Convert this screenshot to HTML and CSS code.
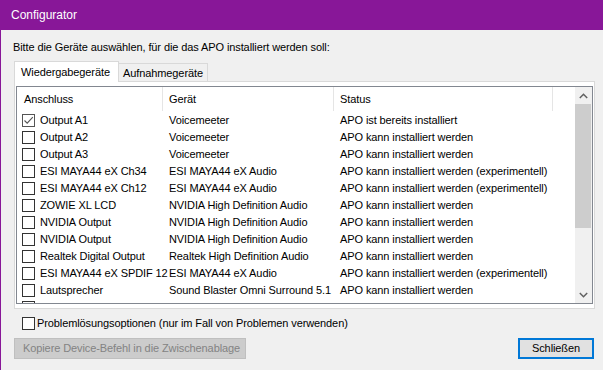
FILE: index.html
```html
<!DOCTYPE html>
<html lang="de">
<head>
<meta charset="utf-8">
<title>Configurator</title>
<link rel="stylesheet" href="styles.css">
</head>
<body>
<div class="window">
  <div class="titlebar">Configurator</div>
  <div class="content">
    <p class="intro">Bitte die Geräte auswählen, für die das APO installiert werden soll:</p>
    <div class="tabs">
      <div class="tab active">Wiedergabegeräte</div>
      <div class="tab">Aufnahmegeräte</div>
    </div>
    <div class="panel">
      <div class="list">
        <div class="list-main">
          <div class="header">
            <div class="hcell c1">Anschluss</div>
            <div class="hcell c2">Gerät</div>
            <div class="hcell c3">Status</div>
            <div class="hcell c4"></div>
          </div>
          <div class="rows">
            <div class="row"><div class="cell c1"><span class="cb checked"><svg width="11" height="11" viewBox="0 0 11 11"><path d="M1.5 5.5 L4.2 8.2 L9.8 2.2" fill="none" stroke="#555" stroke-width="1.1"/></svg></span>Output A1</div><div class="cell c2">Voicemeeter</div><div class="cell c3">APO ist bereits installiert</div></div>
            <div class="row"><div class="cell c1"><span class="cb"></span>Output A2</div><div class="cell c2">Voicemeeter</div><div class="cell c3">APO kann installiert werden</div></div>
            <div class="row"><div class="cell c1"><span class="cb"></span>Output A3</div><div class="cell c2">Voicemeeter</div><div class="cell c3">APO kann installiert werden</div></div>
            <div class="row"><div class="cell c1"><span class="cb"></span>ESI MAYA44 eX Ch34</div><div class="cell c2">ESI MAYA44 eX Audio</div><div class="cell c3">APO kann installiert werden (experimentell)</div></div>
            <div class="row"><div class="cell c1"><span class="cb"></span>ESI MAYA44 eX Ch12</div><div class="cell c2">ESI MAYA44 eX Audio</div><div class="cell c3">APO kann installiert werden (experimentell)</div></div>
            <div class="row"><div class="cell c1"><span class="cb"></span>ZOWIE XL LCD</div><div class="cell c2">NVIDIA High Definition Audio</div><div class="cell c3">APO kann installiert werden</div></div>
            <div class="row"><div class="cell c1"><span class="cb"></span>NVIDIA Output</div><div class="cell c2">NVIDIA High Definition Audio</div><div class="cell c3">APO kann installiert werden</div></div>
            <div class="row"><div class="cell c1"><span class="cb"></span>NVIDIA Output</div><div class="cell c2">NVIDIA High Definition Audio</div><div class="cell c3">APO kann installiert werden</div></div>
            <div class="row"><div class="cell c1"><span class="cb"></span>Realtek Digital Output</div><div class="cell c2">Realtek High Definition Audio</div><div class="cell c3">APO kann installiert werden</div></div>
            <div class="row"><div class="cell c1"><span class="cb"></span>ESI MAYA44 eX SPDIF 12</div><div class="cell c2">ESI MAYA44 eX Audio</div><div class="cell c3">APO kann installiert werden (experimentell)</div></div>
            <div class="row"><div class="cell c1"><span class="cb"></span>Lautsprecher</div><div class="cell c2">Sound Blaster Omni Surround 5.1</div><div class="cell c3">APO kann installiert werden</div></div>
            <div class="row"><div class="cell c1"><span class="cb"></span></div><div class="cell c2"></div><div class="cell c3"></div></div>
          </div>
        </div>
        <div class="scrollbar">
          <div class="sb-btn"><svg width="9" height="6" viewBox="0 0 9 6"><path d="M0.8 5 L4.5 1.3 L8.2 5" fill="none" stroke="#606060" stroke-width="1.5"/></svg></div>
          <div class="sb-track"><div class="sb-thumb"></div></div>
          <div class="sb-btn"><svg width="9" height="6" viewBox="0 0 9 6"><path d="M0.8 1 L4.5 4.7 L8.2 1" fill="none" stroke="#606060" stroke-width="1.5"/></svg></div>
        </div>
      </div>
    </div>
    <div class="option"><span class="cb"></span>Problemlösungsoptionen (nur im Fall von Problemen verwenden)</div>
    <div class="buttons">
      <div class="btn disabled">Kopiere Device-Befehl in die Zwischenablage</div>
      <div class="btn default">Schließen</div>
    </div>
  </div>
</div>
</body>
</html>
```

FILE: styles.css
```css
* { box-sizing: border-box; }
html, body { margin: 0; padding: 0; }
body {
  width: 603px;
  height: 370px;
  overflow: hidden;
  background: #f0f0f0;
  font-family: "Liberation Sans", Arial, sans-serif;
  font-size: 11px;
  letter-spacing: -0.1px;
  color: #000;
}
.window {
  height: 370px;
  border-left: 1px solid #881798;
  background: #f0f0f0;
}
.titlebar {
  height: 30px;
  line-height: 30px;
  background: #881798;
  color: #fff;
  font-size: 12px;
  letter-spacing: 0;
  margin-left: -1px;
  padding-left: 11px;
}
.content {
  padding: 0 8px 0 13px;
}
.intro {
  margin: 10px 0 0 -1px;
  line-height: 15px;
  height: 15px;
}
.tabs {
  display: flex;
  align-items: flex-end;
  height: 20px;
  margin-top: 6px;
}
.tab {
  border: 1px solid #d9d9d9;
  border-bottom: none;
  white-space: nowrap;
}
.tab.active {
  position: relative;
  z-index: 1;
  background: #fff;
  height: 21px;
  margin-bottom: -1px;
  width: 105px;
  padding: 4px 0 0 6px;
}
.tab:not(.active) {
  border-left: none;
  height: 18px;
  width: 89px;
  padding: 3px 0 0 4px;
  background: #f0f0f0;
}
.panel {
  border: 1px solid #d9d9d9;
  background: #fff;
  width: 581px;
  height: 228px;
  padding: 4px 1px;
}
.list {
  display: flex;
  border: 1px solid #828790;
  background: #fff;
  height: 218px;
  overflow: hidden;
}
.list-main {
  flex: 1;
  overflow: hidden;
}
.header {
  display: flex;
  height: 25px;
}
.hcell {
  height: 24px;
  line-height: 24px;
  border-right: 1px solid #e5e5e5;
  white-space: nowrap;
}
.hcell.c1 { width: 146px; padding-left: 7px; }
.hcell.c2 { width: 171px; padding-left: 6px; }
.hcell.c3 { width: 219px; padding-left: 6px; }
.hcell.c4 { width: 21px; border-right: none; }
.row {
  display: flex;
  height: 17px;
  line-height: 17px;
  white-space: nowrap;
}
.cell.c1 {
  width: 146px;
  padding-left: 5px;
  display: flex;
  align-items: center;
}
.cell.c2 { width: 171px; padding-left: 6px; }
.cell.c3 { width: 219px; padding-left: 6px; overflow: visible; }
.cb {
  display: inline-flex;
  align-items: center;
  justify-content: center;
  width: 13px;
  height: 13px;
  border: 1px solid #333;
  background: #fff;
  flex: none;
  margin-right: 5px;
}
.cb.checked { border-color: #555; }
.scrollbar {
  width: 17px;
  flex: none;
  display: flex;
  flex-direction: column;
  background: #f0f0f0;
}
.sb-btn {
  height: 17px;
  display: flex;
  align-items: center;
  justify-content: center;
}
.sb-track {
  flex: 1;
}
.sb-thumb {
  height: 124px;
  background: #cdcdcd;
  margin: 0 1px 0 0;
}
.option {
  display: flex;
  align-items: center;
  height: 16px;
  margin-top: 6px;
  padding-left: 8px;
  white-space: nowrap;
}
.option .cb { margin-right: 2px; }
.buttons {
  display: flex;
  justify-content: space-between;
  margin-top: 7px;
  padding-right: 1px;
}
.btn {
  height: 21px;
  line-height: 19px;
  white-space: nowrap;
}
.btn.disabled {
  width: 232px;
  border: 1px solid #bfbfbf;
  background: #cccccc;
  color: #838383;
  padding-left: 8px;
}
.btn.default {
  width: 76px;
  border: 2px solid #0078d7;
  background: #e1e1e1;
  line-height: 17px;
  text-align: center;
}
```
